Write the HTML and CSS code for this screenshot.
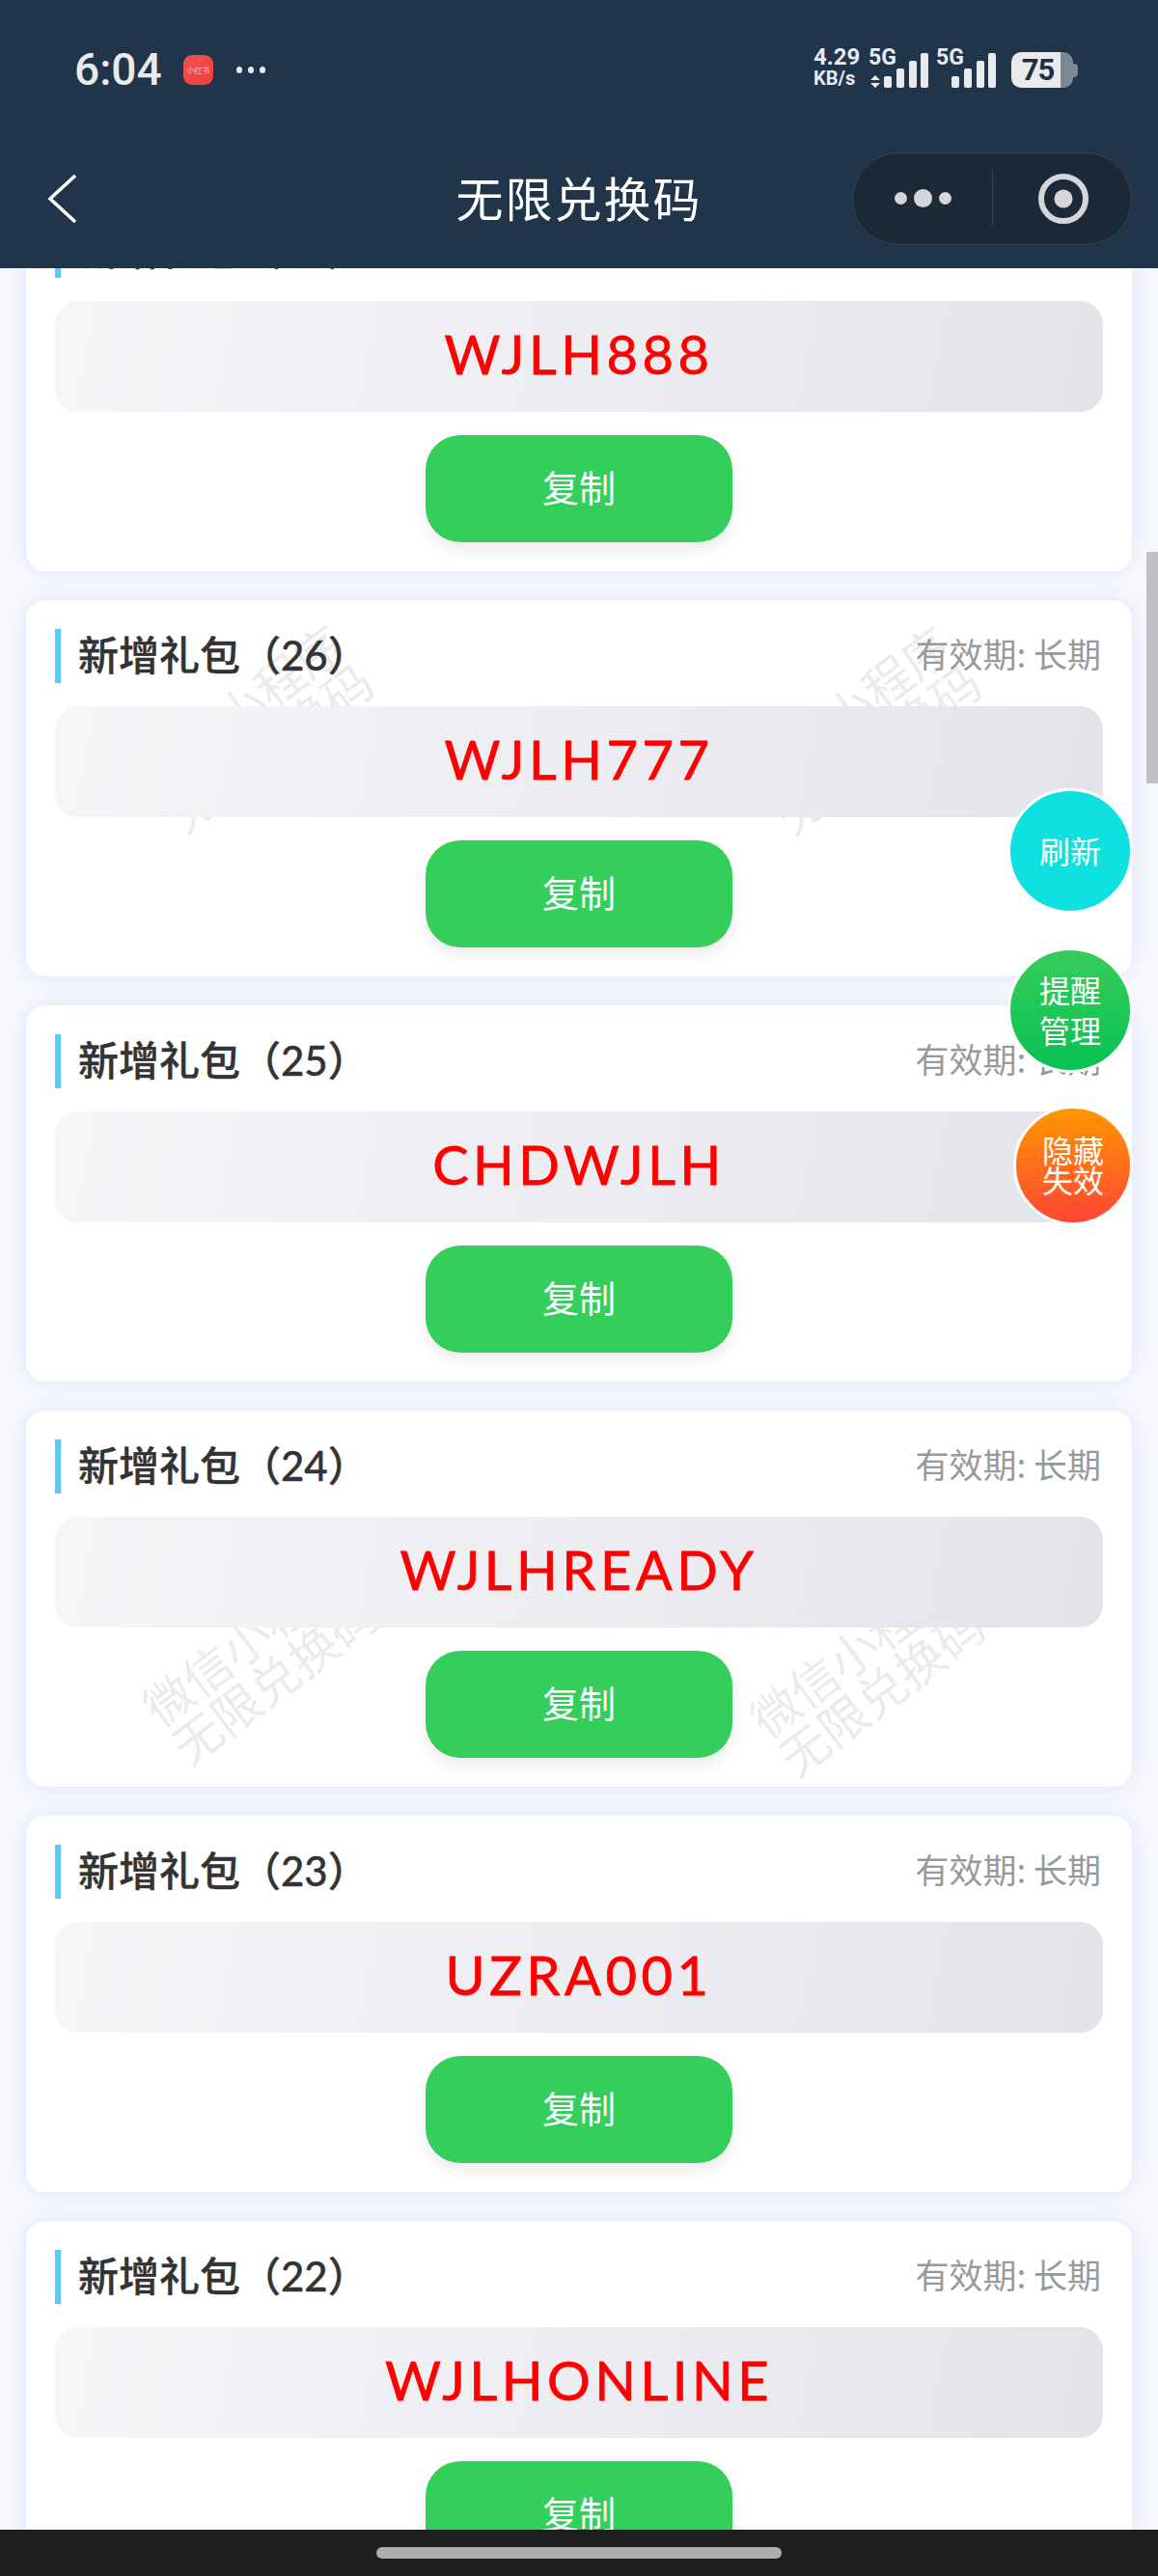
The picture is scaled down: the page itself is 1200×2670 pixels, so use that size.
FILE: index.html
```html
<!DOCTYPE html>
<html lang="zh-CN">
<head>
  <meta charset="UTF-8" />
  <title>无限兑换码</title>
  <link rel="stylesheet" href="styles.css">
</head>
<body>
  <div class="page">
    <header class="top">
      <div class="status">
        <div class="status-left">
          <span class="time">6:04</span>
          <span class="app-badge">小红书</span>
          <span class="more-dots"><i></i><i></i><i></i></span>
        </div>
        <div class="status-right">
          <div class="speed"><span class="speed-num">4.29</span><span class="speed-unit">KB/s</span></div>
          <div class="sim">
            <span class="sim-label">5G</span>
            <svg width="62" height="40" viewBox="0 0 62 40" fill="#e8eaee">
              <path d="M7 27l5 5H2zM7 40l5-5H2z"/>
              <rect x="16" y="28" width="8" height="12" rx="2"/>
              <rect x="29" y="20" width="8" height="20" rx="2"/>
              <rect x="42" y="12" width="8" height="28" rx="2"/>
              <rect x="54" y="4" width="8" height="36" rx="2"/>
            </svg>
          </div>
          <div class="sim">
            <span class="sim-label">5G</span>
            <svg width="62" height="40" viewBox="0 0 62 40" fill="#e8eaee">
              <rect x="16" y="28" width="8" height="12" rx="2"/>
              <rect x="29" y="20" width="8" height="20" rx="2"/>
              <rect x="42" y="12" width="8" height="28" rx="2"/>
              <rect x="54" y="4" width="8" height="36" rx="2"/>
            </svg>
          </div>
          <div class="battery"><span class="battery-body">75</span><span class="battery-nub"></span></div>
        </div>
      </div>
      <nav class="navbar">
        <svg class="back" width="32" height="52" viewBox="0 0 32 52" fill="none" stroke="#fff" stroke-width="3.6">
          <path d="M29 2L3 26l26 24"/>
        </svg>
        <div class="nav-title">无限兑换码</div>
        <div class="capsule">
          <div class="capsule-more"><i></i><i class="big"></i><i></i></div>
          <div class="capsule-line"></div>
          <div class="capsule-close">
            <svg width="60" height="60" viewBox="0 0 60 60">
              <circle cx="30" cy="30" r="23" fill="none" stroke="#d4d6da" stroke-width="6"/>
              <circle cx="30" cy="30" r="9.5" fill="#d4d6da"/>
            </svg>
          </div>
        </div>
      </nav>
    </header>

    <main class="content">
      <div class="list">
        <section class="card">
          <div class="card-head"><span class="card-title">新增礼包（27）</span><span class="card-date">有效期: 长期</span></div>
          <div class="code">WJLH888</div>
          <button class="copy">复制</button>
        </section>
        <section class="card">
          <div class="card-head"><span class="card-title">新增礼包（26）</span><span class="card-date">有效期: 长期</span></div>
          <div class="code">WJLH777</div>
          <button class="copy">复制</button>
        </section>
        <section class="card">
          <div class="card-head"><span class="card-title">新增礼包（25）</span><span class="card-date">有效期: 长期</span></div>
          <div class="code">CHDWJLH</div>
          <button class="copy">复制</button>
        </section>
        <section class="card">
          <div class="card-head"><span class="card-title">新增礼包（24）</span><span class="card-date">有效期: 长期</span></div>
          <div class="code">WJLHREADY</div>
          <button class="copy">复制</button>
        </section>
        <section class="card">
          <div class="card-head"><span class="card-title">新增礼包（23）</span><span class="card-date">有效期: 长期</span></div>
          <div class="code">UZRA001</div>
          <button class="copy">复制</button>
        </section>
        <section class="card">
          <div class="card-head"><span class="card-title">新增礼包（22）</span><span class="card-date">有效期: 长期</span></div>
          <div class="code">WJLHONLINE</div>
          <button class="copy">复制</button>
        </section>
      </div>

      <!-- watermark sits over the card white but under the boxes -->
      <div class="wm wm-a">微信小程序<br />无限兑换码</div>
      <div class="wm wm-b">微信小程序<br />无限兑换码</div>
      <div class="wm wm-c">微信小程序<br />无限兑换码</div>
      <div class="wm wm-d">微信小程序<br />无限兑换码</div>

      <div class="scrollbar"></div>

      <div class="fab fab-refresh">刷新</div>
      <div class="fab fab-remind">提醒<br />管理</div>
      <div class="fab fab-hide">隐藏<br />失效</div>
    </main>

    <footer class="home-bar"><span class="home-pill"></span></footer>
  </div>
</body>
</html>
```

FILE: styles.css
```css
:root {
  --head: #20344a;
  --cjk: "Noto Sans CJK SC", sans-serif;
}

body {
  margin: 0;
  font-family: "Lato", "Noto Sans CJK SC", sans-serif;
}

.page {
  width: 1200px;
  height: 2670px;
  display: flex;
  flex-direction: column;
  overflow: hidden;
  background: #f8f9fe;
}

/* top area */
.top {
  height: 278px;
  flex: none;
  background: var(--head);
  position: relative;
  z-index: 5;
}

.status {
  height: 144px;
  display: flex;
  justify-content: space-between;
  align-items: center;
  padding: 0 83px 0 77px;
}

.status-left {
  display: flex;
  align-items: center;
}

.time {
  font-family: "Roboto", sans-serif;
  font-size: 46px;
  font-weight: 500;
  color: #e8eaee;
  width: 113px;
}

.app-badge {
  width: 31px;
  height: 31px;
  border-radius: 9px;
  background: linear-gradient(135deg, #f0524f, #f43d3f);
  color: #f6c8c8;
  font-family: var(--cjk);
  font-size: 8px;
  line-height: 31px;
  text-align: center;
  white-space: nowrap;
  overflow: hidden;
}

.more-dots {
  display: flex;
  gap: 6px;
  margin-left: 24px;
}

.more-dots i {
  width: 6px;
  height: 7px;
  border-radius: 50%;
  background: #e8eaee;
}

.status-right {
  display: flex;
  align-items: flex-end;
  height: 42px;
  margin-top: -4px;
}

.speed {
  display: flex;
  flex-direction: column;
  width: 57px;
  font-family: "Roboto", sans-serif;
  font-weight: 700;
  color: #e8eaee;
}

.speed-num {
  font-size: 24px;
  line-height: 24px;
}

.speed-unit {
  font-size: 20px;
  line-height: 20px;
}

.sim {
  position: relative;
  width: 62px;
  height: 40px;
  margin-right: 8px;
}

.sim svg {
  display: block;
}

.sim-label {
  position: absolute;
  left: 0;
  top: -2px;
  font-family: "Roboto", sans-serif;
  font-size: 23px;
  line-height: 22px;
  font-weight: 700;
  color: #e8eaee;
}

.battery {
  display: flex;
  align-items: center;
  margin-left: 8px;
  height: 37px;
}

.battery-body {
  width: 64px;
  height: 37px;
  border-radius: 10px;
  background: linear-gradient(90deg, #e8eaee 79%, #7c8894 79%);
  color: #1f2f40;
  font-family: "Roboto", sans-serif;
  font-size: 31px;
  font-weight: 700;
  line-height: 37px;
  text-align: center;
  letter-spacing: -1px;
  box-sizing: border-box;
  padding-right: 9px;
}

.battery-nub {
  width: 5px;
  height: 14px;
  background: #7c8894;
  border-radius: 0 4px 4px 0;
}

.navbar {
  height: 123px;
  display: grid;
  grid-template-columns: 1fr auto 1fr;
  align-items: center;
  padding: 0 27px;
}

.back {
  display: block;
  margin-left: 22px;
}

.nav-title {
  color: #fff;
  font-family: var(--cjk);
  font-size: 49px;
  line-height: 60px;
  letter-spacing: 2px;
  padding-bottom: 4px;
}

.capsule {
  justify-self: end;
  width: 290px;
  height: 96px;
  box-sizing: border-box;
  border: 1px solid #33435a;
  border-radius: 48px;
  background: #1c2a38;
  display: flex;
  align-items: center;
}

.capsule-more {
  width: 144px;
  display: flex;
  justify-content: center;
  align-items: center;
  gap: 7px;
}

.capsule-more i {
  width: 13px;
  height: 13px;
  border-radius: 50%;
  background: #d4d6da;
}

.capsule-more i.big {
  width: 19px;
  height: 19px;
}

.capsule-line {
  width: 1px;
  height: 57px;
  background: #33435a;
}

.capsule-close {
  flex: 1;
  display: flex;
  justify-content: center;
  padding-left: 2px;
}

.capsule-close svg {
  display: block;
}

/* list */
.content {
  flex: 1;
  position: relative;
  overflow: hidden;
}

.list {
  margin-top: -76px;
  padding: 0 27px;
  display: flex;
  flex-direction: column;
  gap: 30px;
}

.card {
  height: 390px;
  flex: none;
  box-sizing: border-box;
  padding: 30px;
  background: #fff;
  border-radius: 20px;
  box-shadow: 0 0 22px rgba(80, 120, 230, 0.17);
  display: flex;
  flex-direction: column;
  align-items: center;
  gap: 24px;
}

.card-head {
  align-self: stretch;
  height: 56px;
  flex: none;
  display: flex;
  justify-content: space-between;
  align-items: center;
  border-left: 6px solid #5ac8fa;
  padding: 0 2px 0 18px;
  position: relative;
  z-index: 2;
}

.card-title {
  font-size: 42px;
  font-weight: 500;
  color: #333;
  padding-bottom: 8px;
  -webkit-text-stroke: 0.4px #333;
}

.card-date {
  font-family: var(--cjk);
  font-size: 35px;
  color: #999;
  padding-bottom: 8px;
}

.code {
  align-self: stretch;
  height: 115px;
  flex: none;
  border-radius: 24px;
  background: linear-gradient(100deg, #f6f6f9, #e3e4ea);
  color: #f00;
  font-size: 56px;
  font-weight: 400;
  letter-spacing: 4.5px;
  line-height: 109px;
  text-align: center;
  -webkit-text-stroke: 0.8px #f00;
  position: relative;
  z-index: 2;
}

.copy {
  width: 318px;
  height: 111px;
  flex: none;
  border: none;
  border-radius: 36px;
  background: #34ce5a;
  box-shadow: 0 8px 16px rgba(0, 0, 0, 0.08);
  color: #fff;
  font-family: var(--cjk);
  font-size: 38px;
  padding: 0 0 6px;
  position: relative;
  z-index: 2;
}

.wm {
  position: absolute;
  width: 260px;
  color: #efeaea;
  font-family: var(--cjk);
  font-size: 50px;
  line-height: 50px;
  text-align: center;
  transform: rotate(-37deg);
  z-index: 1;
}

/* content starts at 278px, so these tops are page y minus 278 */
.wm-a { left: 133px; top: 425px; }
.wm-b { left: 763px; top: 426px; }
.wm-c { left: 138px; top: 1391px; }
.wm-d { left: 767px; top: 1403px; }

.scrollbar {
  position: absolute;
  right: 0;
  top: 294px;
  width: 12px;
  height: 240px;
  background: #c0c0c5;
  z-index: 3;
}

.fab {
  position: absolute;
  right: 26px;
  box-sizing: border-box;
  width: 130px;
  height: 130px;
  border: 3px solid #fff;
  border-radius: 50%;
  padding-bottom: 3px;
  display: flex;
  align-items: center;
  justify-content: center;
  text-align: center;
  color: #fff;
  font-family: var(--cjk);
  font-size: 32px;
  line-height: 42px;
  z-index: 4;
}

.fab-refresh {
  top: 539px;
  background: #0fe0e0;
}

.fab-remind {
  top: 704px;
  background: linear-gradient(180deg, #38cc5a, #07c254);
}

.fab-hide {
  top: 868px;
  width: 124px;
  height: 124px;
  line-height: 31px;
  background: linear-gradient(180deg, #ff9800, #ff4535);
}

.home-bar {
  height: 48px;
  flex: none;
  background: #1e1e1e;
  display: flex;
  justify-content: center;
  align-items: center;
  position: relative;
  z-index: 5;
}

.home-pill {
  width: 420px;
  height: 12px;
  border-radius: 6px;
  background: #aeaeae;
}
```
